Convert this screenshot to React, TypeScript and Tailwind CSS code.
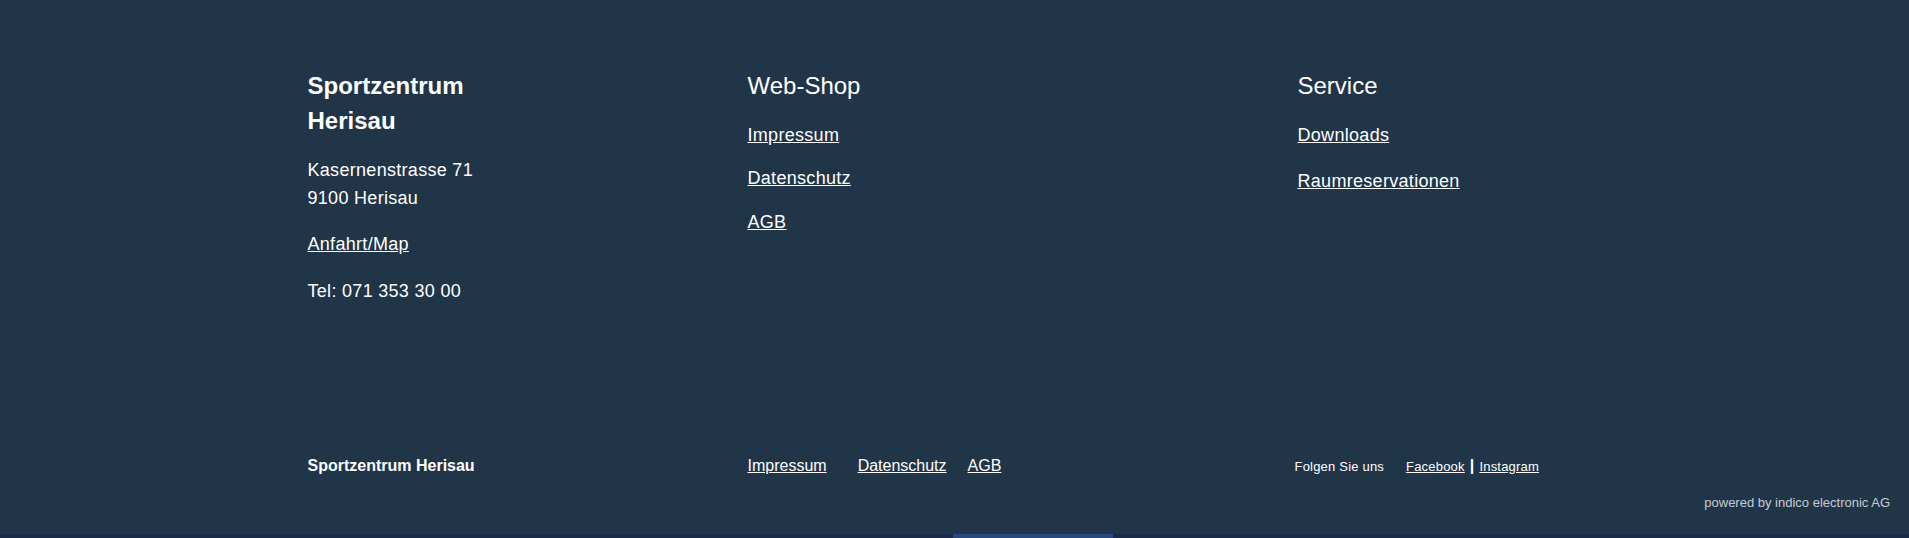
export default function App() {
  const body = "text-[18px] leading-[27.5px] tracking-[0.3px]";
  const col = "pl-[13px] pr-[11px]";
  return (
    <div className="w-full h-[538px] bg-[#213549] flex flex-col text-white font-['Liberation_Sans',Arial,sans-serif]">
      <div className="h-[456px] pt-[68px]">
        <div className="w-[1320px] mx-auto flex">
          <div className={`w-[440px] ${col}`}>
            <h3 className="text-[24px] leading-[35px] font-bold">
              Sportzentrum
              <br />
              Herisau
            </h3>
            <p className={`mt-[19px] ${body}`}>
              Kasernenstrasse 71
              <br />
              9100 Herisau
            </p>
            <p className={`mt-[19px] ${body}`}>
              <a href="#" className="underline">Anfahrt/Map</a>
            </p>
            <p className={`mt-[19px] ${body}`}>Tel: 071 353 30 00</p>
          </div>
          <div className={`w-[550px] ${col}`}>
            <h3 className="text-[24px] leading-[35px] font-normal">Web-Shop</h3>
            <ul className="mt-[18.5px] flex flex-col gap-[16px]">
              <li className={body}><a href="#" className="underline">Impressum</a></li>
              <li className={body}><a href="#" className="underline">Datenschutz</a></li>
              <li className={body}><a href="#" className="underline">AGB</a></li>
            </ul>
          </div>
          <div className={`w-[330px] ${col}`}>
            <h3 className="text-[24px] leading-[35px] font-normal">Service</h3>
            <ul className="mt-[18.5px] flex flex-col gap-[18.5px]">
              <li className={body}><a href="#" className="underline">Downloads</a></li>
              <li className={body}><a href="#" className="underline">Raumreservationen</a></li>
            </ul>
          </div>
        </div>
      </div>

      <div className="h-[20px]">
        <div className="w-[1320px] mx-auto flex items-baseline leading-[20px]">
          <div className={`w-[440px] ${col} text-[16px] font-bold`}>Sportzentrum Herisau</div>
          <div className={`w-[550px] ${col} flex items-baseline text-[16px]`}>
            <a href="#" className="underline mr-[31px]">Impressum</a>
            <a href="#" className="underline mr-[21px]">Datenschutz</a>
            <a href="#" className="underline">AGB</a>
          </div>
          <div className={`w-[330px] ${col} flex items-baseline text-[13px] tracking-[0.2px]`}>
            <span className="-ml-[3px]">Folgen Sie uns</span>
            <a href="#" className="underline ml-[22px]">Facebook</a>
            <span className="mx-[5px] text-[16px] font-bold">|</span>
            <a href="#" className="underline">Instagram</a>
          </div>
        </div>
      </div>

      <div className="mt-[17px] h-[20px] flex justify-end pr-[19px] text-[13px] leading-[20px] text-[#c6cbd2]">
        powered by indico electronic AG
      </div>

      <div className="flex-1" />

      <div className="h-[4px] flex bg-[#1b2a4b]">
        <div className="w-[953px]" />
        <div className="w-[160px] bg-[#29487f]" />
      </div>
    </div>
  );
}
